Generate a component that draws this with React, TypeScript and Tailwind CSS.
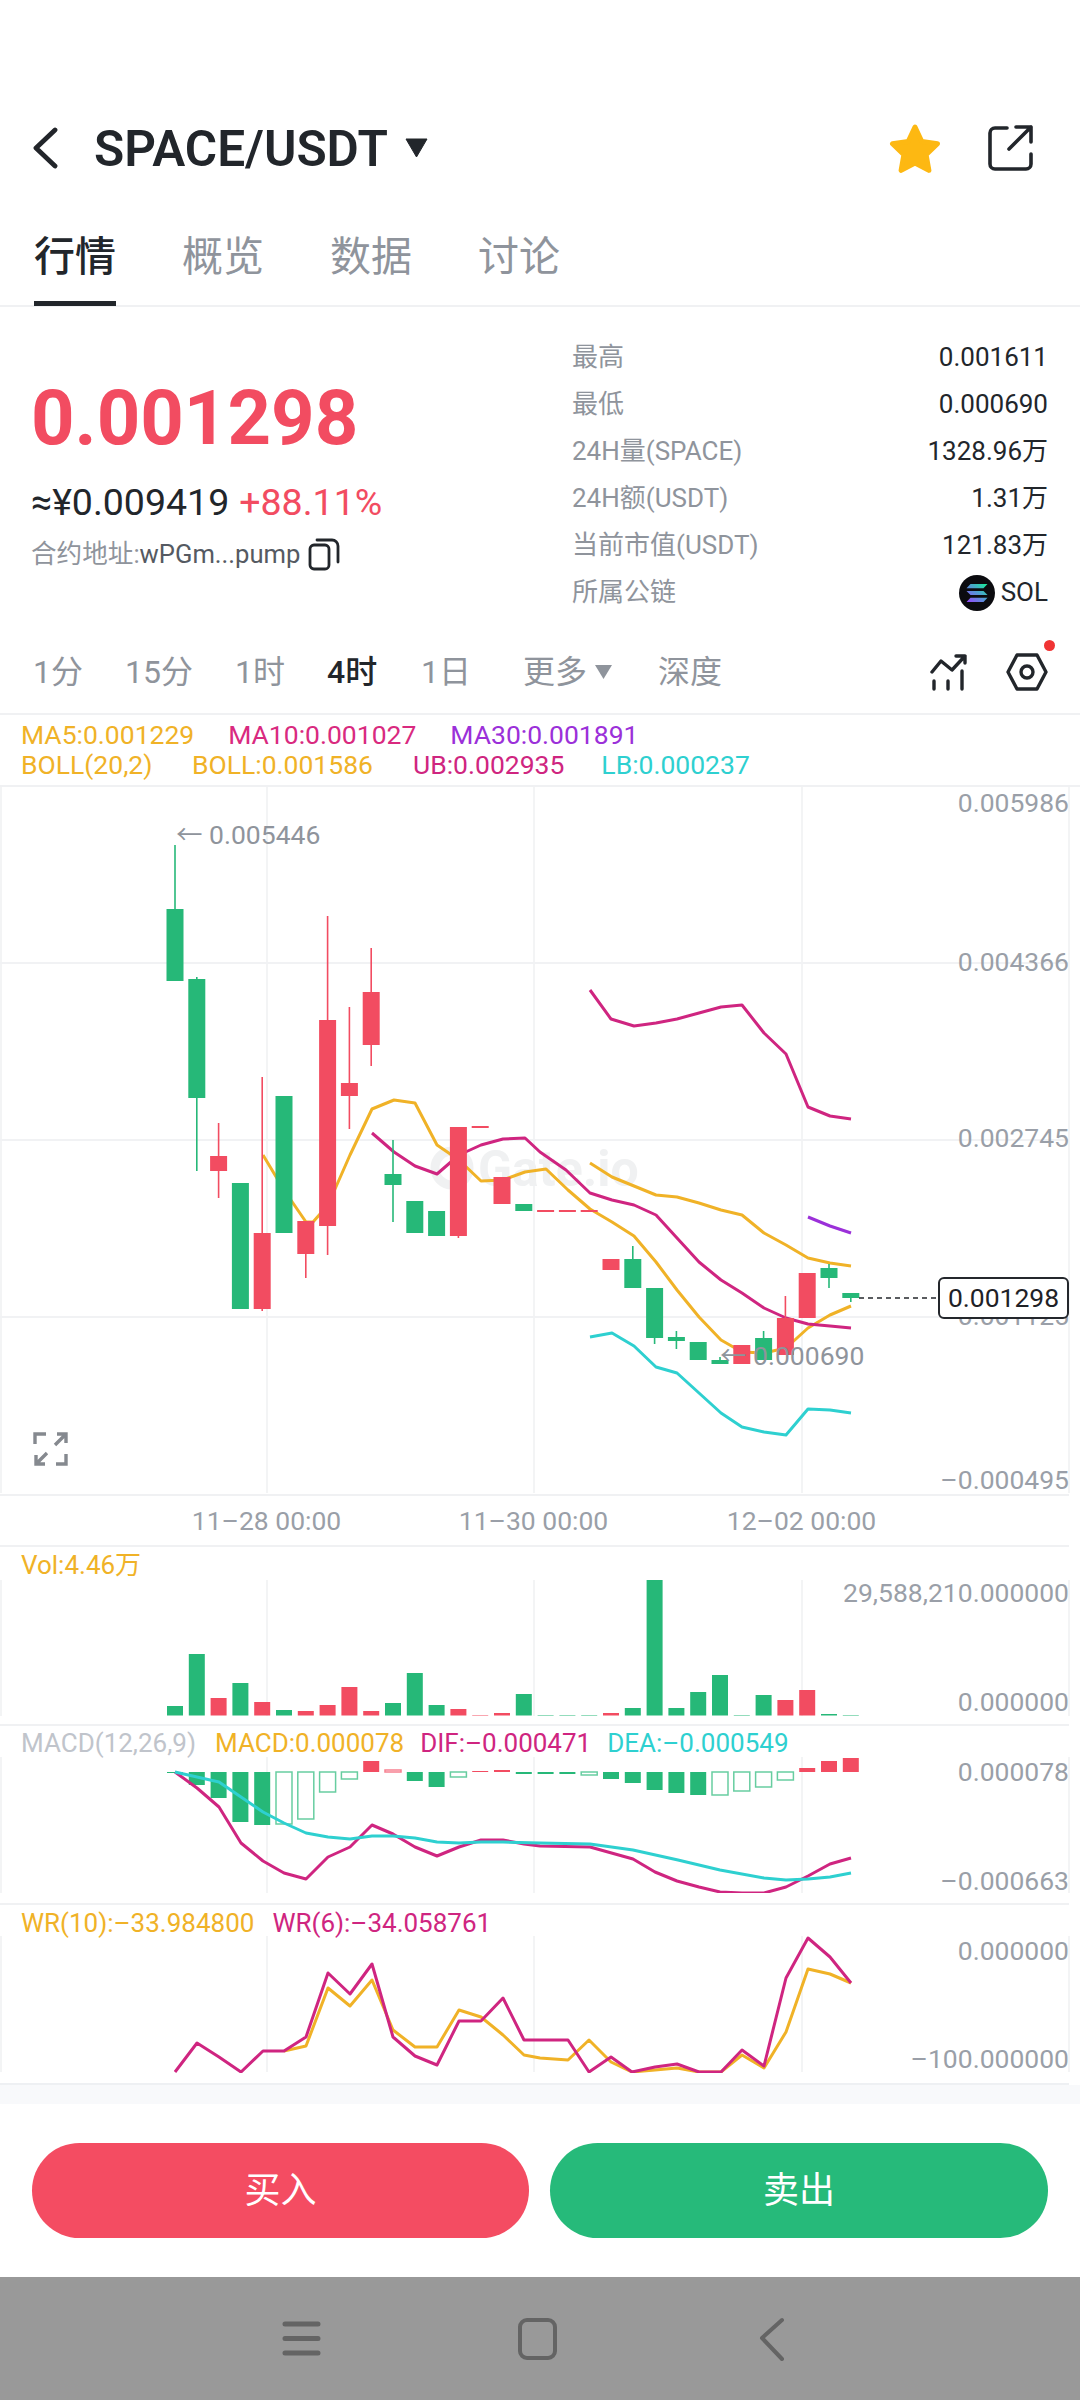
import { Fragment } from "react";

const RED = "#f24c61";
const GREEN = "#26b878";
const ORANGE = "#f0b227";
const PINK = "#cf2580";
const CYAN = "#2ed0d0";
const PURPLE = "#9b30d9";
const GRID = "#eff0f2";

const cx = (i: number) => 175 + 21.8 * i;

// [color, top, bottom, wickTop, wickBottom]
const CANDLES: [string, number, number, number?, number?][] = [
  ["g", 909, 981, 845],
  ["g", 979, 1098, 977, 1171],
  ["r", 1156, 1171, 1123, 1198],
  ["g", 1183, 1309],
  ["r", 1233, 1309, 1077, 1311],
  ["g", 1096, 1233],
  ["r", 1221, 1254, 1221, 1278],
  ["r", 1020, 1226, 916, 1255],
  ["r", 1083, 1096, 1007, 1129],
  ["r", 992, 1045, 948, 1066],
  ["g", 1174, 1185, 1140, 1222],
  ["g", 1201, 1233],
  ["g", 1211, 1236],
  ["r", 1127, 1236, 1127, 1238],
  ["r", 1126, 1128],
  ["r", 1177, 1204],
  ["g", 1204, 1211],
  ["r", 1210, 1212],
  ["r", 1210, 1212],
  ["r", 1210, 1212],
  ["r", 1259, 1270],
  ["g", 1259, 1288, 1246],
  ["g", 1288, 1338, 1288, 1344],
  ["g", 1337, 1341, 1331, 1349],
  ["g", 1342, 1360],
  ["g", 1360, 1364, 1357],
  ["r", 1345, 1364],
  ["g", 1338, 1360, 1331],
  ["r", 1318, 1355, 1296],
  ["r", 1273, 1318],
  ["g", 1268, 1278, 1264, 1288],
  ["g", 1293, 1298, 1293, 1302],
];

const MA5 = "263,1155 284,1190 306,1222 313,1222 328,1205 350,1155 372,1109 394,1100 415,1103 437,1145 459,1160 481,1181 503,1180 525,1172 546,1169 568,1190 590,1209 612,1222 634,1236 656,1262 677,1290 699,1317 721,1340 742,1352 764,1353 786,1348 808,1328 830,1315 851,1306";
const MA10 = "372,1133 394,1152 415,1166 437,1174 459,1155 481,1145 503,1139 525,1138 540,1152 566,1170 590,1193 612,1200 634,1205 656,1215 677,1238 699,1262 721,1280 742,1293 764,1308 786,1318 808,1324 830,1326 851,1328";
const MA30 = "808,1217 830,1226 851,1233";
const BOLL = "590,1163 612,1177 634,1186 656,1195 677,1197 699,1203 721,1210 742,1215 764,1233 786,1245 808,1258 830,1263 851,1266";
const UB = "590,990 611,1019 634,1026 656,1023 677,1019 699,1013 721,1007 742,1005 764,1033 786,1054 808,1107 830,1116 851,1119";
const LB = "590,1337 612,1333 634,1346 656,1367 677,1373 699,1393 721,1413 742,1427 764,1432 786,1435 808,1409 830,1410 851,1413";

// [color, top]
const VOLUME: [string, number][] = [
  ["g", 1706], ["g", 1654], ["r", 1698], ["g", 1683], ["r", 1702], ["g", 1710], ["r", 1711], ["r", 1705],
  ["r", 1687], ["r", 1711], ["g", 1703], ["g", 1673], ["g", 1705], ["r", 1709], ["r", 1715], ["r", 1713],
  ["g", 1694], ["g", 1715], ["g", 1715], ["g", 1715], ["r", 1713], ["g", 1708], ["g", 1579], ["g", 1708],
  ["g", 1692], ["g", 1675], ["g", 1715], ["g", 1695], ["r", 1700], ["r", 1690], ["g", 1714], ["g", 1715],
];

// [color, end y, hollow]
const MACD_BARS: [string, number, boolean][] = [
  ["g", 1773, false], ["g", 1785, false], ["g", 1798, false], ["g", 1822, false], ["g", 1825, false],
  ["g", 1824, true], ["g", 1819, true], ["g", 1792, true], ["g", 1779, true], ["r", 1761, false],
  ["r", 1770, true], ["g", 1781, false], ["g", 1787, false], ["g", 1777, true], ["r", 1771, false],
  ["r", 1770, false], ["g", 1774, false], ["g", 1774, false], ["g", 1774, false], ["g", 1775, true],
  ["g", 1779, false], ["g", 1783, false], ["g", 1790, false], ["g", 1793, false], ["g", 1795, false],
  ["g", 1795, true], ["g", 1791, true], ["g", 1787, true], ["g", 1780, true], ["r", 1768, false],
  ["r", 1761, false], ["r", 1758, false],
];

const DIF = "175,1772 197,1788 219,1807 241,1843 263,1861 284,1873 306,1879 328,1857 350,1847 372,1825 393,1834 415,1847 437,1856 459,1847 481,1840 503,1840 524,1844 540,1846 590,1847 633,1859 655,1872 677,1881 699,1887 720,1892 742,1893 764,1893 786,1887 808,1876 830,1864 851,1858";
const DEA = "175,1772 197,1777 219,1782 241,1797 263,1812 284,1823 306,1833 328,1837 350,1839 372,1836 393,1836 415,1838 437,1842 459,1843 481,1842 503,1842 540,1843 590,1844 633,1850 678,1860 720,1870 764,1878 786,1880 808,1879 830,1877 851,1873";

const WR6 = "175,2072 197,2043 219,2057 241,2072 263,2051 284,2051 306,2037 328,1973 350,1994 372,1964 393,2037 415,2056 437,2065 459,2021 481,2021 503,1998 524,2040 568,2040 589,2072 611,2057 632,2072 655,2067 677,2064 699,2072 721,2072 742,2050 764,2066 786,1978 808,1938 830,1957 851,1983";
const WR10 = "284,2051 306,2046 328,1988 350,2006 372,1980 393,2030 415,2047 437,2047 459,2010 481,2017 503,2035 524,2055 540,2058 568,2060 589,2040 611,2062 632,2072 655,2070 677,2068 699,2072 721,2072 742,2055 764,2068 786,2032 808,1969 830,1974 851,1983";

const STATS = [
  ["最高", "0.001611"],
  ["最低", "0.000690"],
  ["24H量(SPACE)", "1328.96万"],
  ["24H额(USDT)", "1.31万"],
  ["当前市值(USDT)", "121.83万"],
];

const col = (c: string) => (c === "g" ? GREEN : RED);

function Line({ points, color }: { points: string; color: string }) {
  return <polyline points={points} fill="none" stroke={color} strokeWidth="3" strokeLinejoin="round" />;
}

function VGrid({ top, bottom }: { top: number; bottom: number }) {
  return (
    <>
      {[1, 267, 534, 802, 1069].map((x) => (
        <line key={x} x1={x} x2={x} y1={top} y2={bottom} stroke={GRID} strokeWidth="1.5" />
      ))}
    </>
  );
}

// one chart pane: the svg is drawn in page coordinates through its viewBox
function Pane({ top, height, children, labels }: { top: number; height: number; children: React.ReactNode; labels?: React.ReactNode }) {
  return (
    <div className="relative w-[1080px] shrink-0" style={{ height }}>
      <svg className="absolute inset-0" width="1080" height={height} viewBox={`0 ${top} 1080 ${height}`}>
        {children}
      </svg>
      {labels}
    </div>
  );
}

function AxisLabel({ y, text }: { y: number; text: string }) {
  return (
    <span className="absolute right-[11px] text-[26.5px] leading-[32px] text-[#9a9fa8]" style={{ top: y - 16 }}>
      {text}
    </span>
  );
}

function Legend({ children, className }: { children: React.ReactNode; className?: string }) {
  return <div className={`flex items-center pl-[21px] ${className ?? ""}`}>{children}</div>;
}

function MainChart() {
  return (
    <Pane
      top={787}
      height={707}
      labels={
        <>
          <AxisLabel y={16} text="0.005986" />
          <AxisLabel y={175} text="0.004366" />
          <AxisLabel y={351} text="0.002745" />
          <AxisLabel y={529} text="0.001125" />
          <AxisLabel y={693} text="–0.000495" />
          <span className="absolute left-[176px] top-[32px] text-[26.5px] leading-[32px] text-[#8f949c]">← 0.005446</span>
          <span className="absolute left-[720px] top-[553px] text-[26.5px] leading-[32px] text-[#8f949c]">← 0.000690</span>
          <span className="absolute left-[938px] top-[490px] flex h-[42px] w-[131px] items-center justify-center rounded-[6px] border-2 border-[#24272c] bg-white text-[26.5px] text-[#1f2227]">
            0.001298
          </span>
          <svg className="absolute left-[33px] top-[644px]" width="36" height="36" viewBox="0 0 36 36" fill="none" stroke="#85898f" strokeWidth="3.4">
            <path d="M2 13V3h11M24 3h9v9M33 3L22 14M3 24v9h9M3 33l11-11M23 33h10V23" />
          </svg>
        </>
      }
    >
      <VGrid top={787} bottom={1493} />
      {[963, 1140, 1317].map((y) => (
        <line key={y} x1="0" x2="1069" y1={y} y2={y} stroke="#f1f2f4" strokeWidth="2" />
      ))}
      {/* watermark */}
      <circle cx="452" cy="1168" r="17" fill="none" stroke="#f0f1f2" strokeWidth="9" />
      <text x="478" y="1186" fontFamily="Roboto, sans-serif" fontWeight="700" fontSize="50" fill="#f0f1f2">
        Gate.io
      </text>
      <Line points={MA5} color={ORANGE} />
      <Line points={BOLL} color={ORANGE} />
      <Line points={MA10} color={PINK} />
      <Line points={UB} color={PINK} />
      <Line points={LB} color={CYAN} />
      <Line points={MA30} color={PURPLE} />
      {CANDLES.map(([c, top, bottom, wt, wb], i) => (
        <Fragment key={i}>
          <line x1={cx(i)} x2={cx(i)} y1={wt ?? top} y2={wb ?? bottom} stroke={col(c)} strokeWidth="1.6" />
          <rect x={cx(i) - 8.5} y={top} width="17" height={bottom - top} fill={col(c)} />
        </Fragment>
      ))}
      <line x1="859" x2="936" y1="1298" y2="1298" stroke="#24272c" strokeWidth="1.6" strokeDasharray="5 4" />
    </Pane>
  );
}

function VolumeChart() {
  return (
    <Pane
      top={1580}
      height={136}
      labels={
        <>
          <AxisLabel y={13} text="29,588,210.000000" />
          <AxisLabel y={122} text="0.000000" />
        </>
      }
    >
      <VGrid top={1580} bottom={1716} />
      {VOLUME.map(([c, top], i) => (
        <rect key={i} x={cx(i) - 8} y={top} width="16" height={1715.5 - top} fill={col(c)} />
      ))}
    </Pane>
  );
}

function MacdChart() {
  return (
    <Pane
      top={1757}
      height={136}
      labels={
        <>
          <AxisLabel y={15} text="0.000078" />
          <AxisLabel y={124} text="–0.000663" />
        </>
      }
    >
      <VGrid top={1757} bottom={1893} />
      {MACD_BARS.map(([c, y, hollow], i) => {
        const top = Math.min(y, 1772);
        const h = Math.abs(y - 1772);
        return hollow ? (
          <rect key={i} x={cx(i) - 8} y={top} width="16" height={h} fill="white" stroke={col(c)} strokeOpacity="0.7" strokeWidth="1.5" />
        ) : (
          <rect key={i} x={cx(i) - 8} y={top} width="16" height={h} fill={col(c)} />
        );
      })}
      <Line points={DIF} color={PINK} />
      <Line points={DEA} color={CYAN} />
    </Pane>
  );
}

function WrChart() {
  return (
    <Pane
      top={1936}
      height={137}
      labels={
        <>
          <AxisLabel y={15} text="0.000000" />
          <AxisLabel y={123} text="–100.000000" />
        </>
      }
    >
      <VGrid top={1936} bottom={2072} />
      <Line points={WR10} color={ORANGE} />
      <Line points={WR6} color={PINK} />
    </Pane>
  );
}

function SolIcon() {
  return (
    <svg width="36" height="36" viewBox="0 0 36 36">
      <defs>
        <linearGradient id="sol" x1="0" y1="1" x2="1" y2="0">
          <stop offset="0" stopColor="#9945ff" />
          <stop offset="0.5" stopColor="#5497d5" />
          <stop offset="1" stopColor="#14f195" />
        </linearGradient>
      </defs>
      <circle cx="18" cy="18" r="18" fill="#0b0b0f" />
      <path d="M11.5 9h17l-4 4.2h-17zM7.5 15.9h17l4 4.2h-17zM11.5 22.8h17l-4 4.2h-17z" fill="url(#sol)" />
    </svg>
  );
}

export default function App() {
  return (
    <div
      className="flex h-[2400px] w-[1080px] flex-col overflow-hidden bg-white"
      style={{ fontFamily: "Roboto, 'Noto Sans CJK SC', sans-serif" }}
    >
      {/* Header */}
      <header className="mt-[90px] flex h-[116px] shrink-0 items-center pl-[32px] pr-[46px]">
        <svg width="26" height="42" viewBox="0 0 26 42" fill="none" stroke="#22252a" strokeWidth="4.8" strokeLinecap="round" strokeLinejoin="round">
          <path d="M23 3L4 21l19 18" />
        </svg>
        <span className="ml-[36px] pt-[3px] text-[49.5px] font-semibold leading-none text-[#22262b]">SPACE/USDT</span>
        <svg className="ml-[17px]" width="23" height="20" viewBox="0 0 23 20">
          <path d="M1 1h21L11.500 19z" fill="#22262b" stroke="#22262b" strokeLinejoin="round" />
        </svg>
        <svg className="ml-auto" width="54" height="50" viewBox="0 0 54 50">
          <path d="M27 4l6.800 14.500 15.700 2.200-11.400 11 2.800 15.700L27 40l-13.900 7.400 2.800-15.700-11.400-11 15.700-2.200z" fill="#fdb812" stroke="#fdb812" strokeWidth="5" strokeLinejoin="round" />
        </svg>
        <svg className="ml-[46px]" width="46" height="46" viewBox="0 0 46 46" fill="none" stroke="#22262b" strokeWidth="3.600" strokeLinecap="round" strokeLinejoin="round">
          <path d="M19 3H7a5 5 0 0 0-5 5v31a5 5 0 0 0 5 5h31a5 5 0 0 0 5-5V29" />
          <path d="M21 24L43 2M28 2h15v15" />
        </svg>
      </header>

      {/* Tabs */}
      <nav className="flex h-[101px] shrink-0 gap-[66px] border-b-2 border-[#f0f1f3] pl-[34px] text-[41px] leading-none text-[#8f949c]">
        {["行情", "概览", "数据", "讨论"].map((t, i) => (
          <div key={t} className={`relative pt-[31px] ${i === 0 ? "font-medium text-[#22262b]" : ""}`}>
            {t}
            {i === 0 && <span className="absolute bottom-[-1px] left-0 h-[5px] w-full bg-[#22262b]" />}
          </div>
        ))}
      </nav>

      {/* Summary */}
      <section className="flex h-[327px] shrink-0 pl-[31px] pr-[32px]">
        <div className="w-[541px] pt-[67px]">
          <div className="text-[76px] font-bold leading-[88px] text-[#f24c61]">0.001298</div>
          <div className="mt-[18px] flex items-center gap-[10px] text-[37.5px] leading-[44px]">
            <span className="text-[#22262b]">≈¥0.009419</span>
            <span className="text-[#f24c61]">+88.11%</span>
          </div>
          <div className="mt-[13px] flex items-center gap-[8px] text-[25.6px] leading-[34px] text-[#8f949c]">
            <span>
              合约地址:<span className="text-[#555a62]">wPGm...pump</span>
            </span>
            <svg width="32" height="34" viewBox="0 0 32 34" fill="none" stroke="#22262b" strokeWidth="2.800" strokeLinejoin="round">
              <rect x="2" y="8" width="19" height="24" rx="4" />
              <path d="M9 3h15a6 6 0 0 1 6 6v16" strokeLinecap="round" />
            </svg>
          </div>
        </div>
        <div className="flex-1 pt-[27px]">
          {STATS.map(([k, v]) => (
            <div key={k} className="flex h-[47px] items-center justify-between text-[26px]">
              <span className="text-[#8f949c]">{k}</span>
              <span className="text-[#22262b]">{v}</span>
            </div>
          ))}
          <div className="flex h-[47px] items-center justify-between text-[26px]">
            <span className="text-[#8f949c]">所属公链</span>
            <span className="flex items-center gap-[6px] text-[#22262b]">
              <SolIcon />
              SOL
            </span>
          </div>
        </div>
      </section>

      {/* Timeframes */}
      <div className="flex h-[79px] shrink-0 items-center pb-[3px] pl-[33px] text-[32px] text-[#8f949c]">
        <span className="w-[92px]">1分</span>
        <span className="w-[110px]">15分</span>
        <span className="w-[92px]">1时</span>
        <span className="w-[94px] font-medium text-[#22262b]">4时</span>
        <span className="w-[102px]">1日</span>
        <span className="flex w-[135px] items-center gap-[8px]">
          更多
          <svg width="17" height="14" viewBox="0 0 17 14">
            <path d="M0 0h17L8.500 14z" fill="#8f949c" />
          </svg>
        </span>
        <span>深度</span>
        <svg className="ml-auto" width="38" height="38" viewBox="0 0 38 38" fill="none" stroke="#22262b" strokeWidth="3.400" strokeLinecap="round" strokeLinejoin="round">
          <path d="M3 19L12 8l11 9L36 3M27 3h9v7" />
          <path d="M5 28v8M19 28v8M33 18v18" />
        </svg>
        <div className="relative ml-[39px] mr-[32px] flex">
          <svg width="42" height="38" viewBox="0 0 42 38" fill="none" stroke="#22262b" strokeWidth="3.400" strokeLinejoin="round">
            <path d="M11 2h20l9 17-9 17H11L2 19z" />
            <circle cx="21" cy="19" r="6" />
          </svg>
          <span className="absolute right-[-7px] top-[-13px] h-[11px] w-[11px] rounded-full bg-[#f03434]" />
        </div>
      </div>

      {/* Indicators */}
      <div className="flex h-[74px] shrink-0 flex-col justify-center border-y-2 border-[#f0f1f3] leading-[30px]">
        <Legend className="gap-[34px] text-[26.5px]">
          <span className="text-[#f0b227]">MA5:0.001229</span>
          <span className="text-[#d92a7f]">MA10:0.001027</span>
          <span className="text-[#9b30d9]">MA30:0.001891</span>
        </Legend>
        <Legend className="gap-[37px] text-[26.5px]">
          <span className="w-[134px] text-[#f0b227]">BOLL(20,2)</span>
          <span className="w-[184px] text-[#f0b227]">BOLL:0.001586</span>
          <span className="text-[#cf2580]">UB:0.002935</span>
          <span className="text-[#2ed0d0]">LB:0.000237</span>
        </Legend>
      </div>

      <MainChart />

      {/* Time axis */}
      <div className="flex h-[53px] w-[1069px] shrink-0 items-center border-y-2 border-t-[#f0f1f3] border-b-[#f0f1f3] text-[26.5px] text-[#9a9fa8]">
        <span className="w-[267px] translate-x-[133px] text-center">11–28 00:00</span>
        <span className="w-[267px] translate-x-[133px] text-center">11–30 00:00</span>
        <span className="w-[267px] translate-x-[134px] text-center">12–02 00:00</span>
      </div>

      <Legend className="h-[33px] shrink-0 pt-[3px] text-[26px] text-[#f0b227]">Vol:4.46万</Legend>
      <VolumeChart />

      <div className="mt-[8px] h-[2px] w-[1069px] shrink-0 bg-[#f0f1f3]" />
      <Legend className="h-[31px] shrink-0 gap-[16px] pt-[4px] text-[26px]">
        <span className="w-[178px] text-[#c0c4cb]">MACD(12,26,9)</span>
        <span className="text-[#f0b227]">MACD:0.000078</span>
        <span className="text-[#cf2580]">DIF:–0.000471</span>
        <span className="text-[#2ed0d0]">DEA:–0.000549</span>
      </Legend>
      <MacdChart />

      <div className="mt-[10px] h-[2px] w-[1069px] shrink-0 bg-[#f0f1f3]" />
      <Legend className="h-[31px] shrink-0 gap-[18px] pt-[5px] text-[26px]">
        <span className="text-[#f0b227]">WR(10):–33.984800</span>
        <span className="text-[#cf2580]">WR(6):–34.058761</span>
      </Legend>
      <WrChart />

      <div className="mt-[10px] h-[2px] w-[1069px] shrink-0 bg-[#eef0f3]" />
      <div className="h-[19px] shrink-0 bg-[#f8f9fb]" />

      {/* Buy / sell */}
      <div className="flex h-[173px] shrink-0 items-center justify-between pl-[32px] pr-[32px]">
        <button className="flex h-[95px] w-[497px] items-center justify-center rounded-full bg-[#f44c62] text-[36px] text-white">买入</button>
        <button className="flex h-[95px] w-[498px] items-center justify-center rounded-full bg-[#26ba7a] text-[36px] text-white">卖出</button>
      </div>

      {/* System nav */}
      <div className="relative h-[123px] shrink-0 bg-[#999999]">
        <svg className="absolute left-[280px] top-[39px]" width="510" height="45" viewBox="0 0 510 45" fill="none" stroke="#646464">
          <path d="M5 8h33M5 22.500h33M5 37h33" strokeWidth="5" strokeLinecap="round" />
          <rect x="240" y="4" width="35" height="38" rx="7" strokeWidth="4" />
          <path d="M502 4L482 22l20 21" strokeWidth="4" strokeLinecap="round" strokeLinejoin="round" />
        </svg>
      </div>
    </div>
  );
}
